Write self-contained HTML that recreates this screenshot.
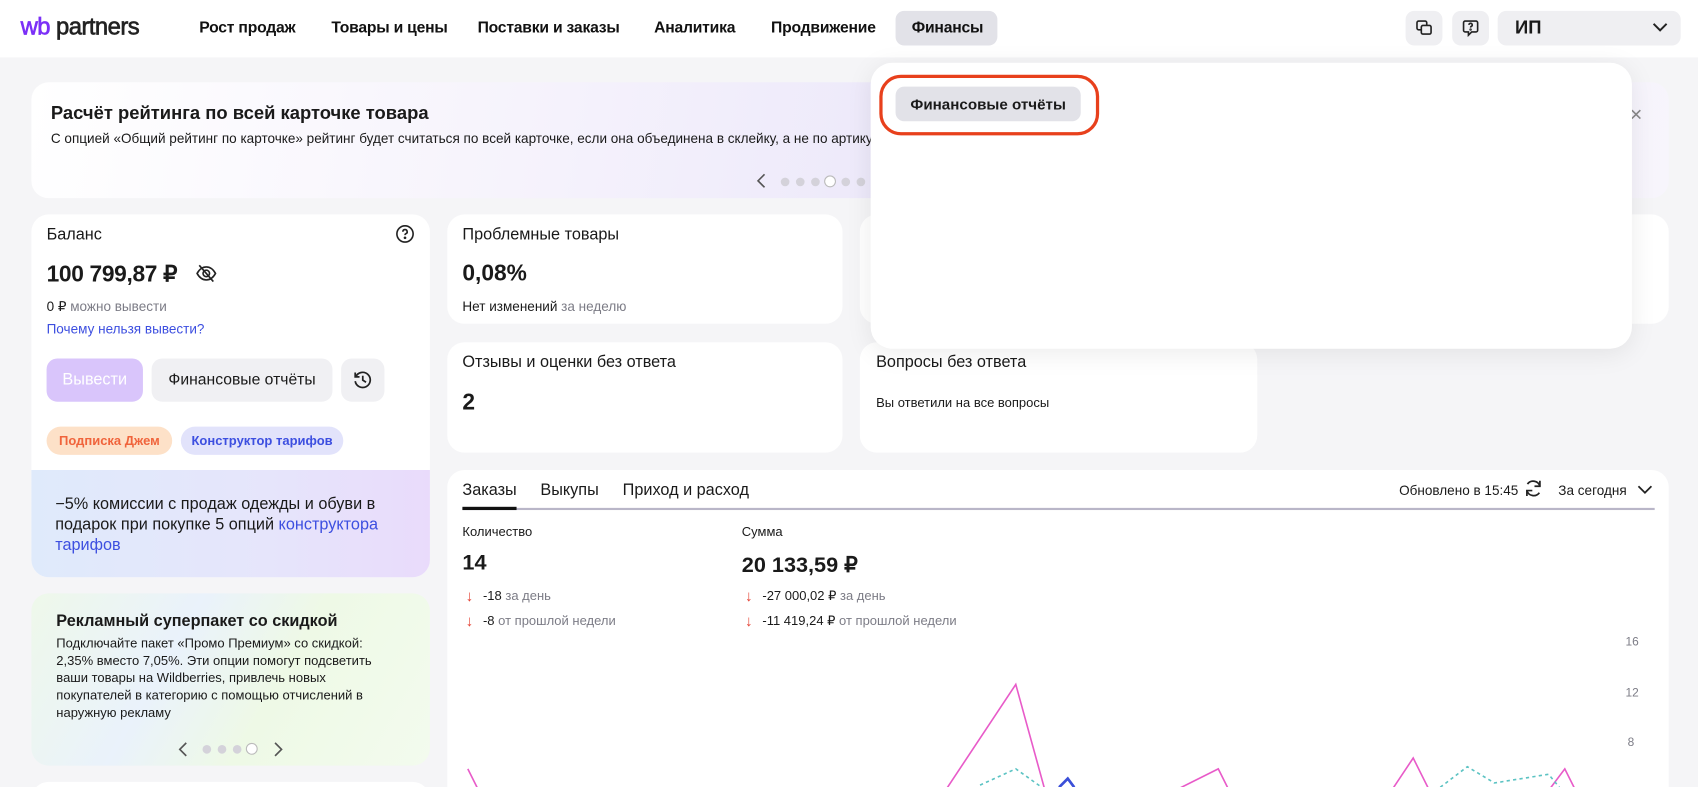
<!DOCTYPE html>
<html><head><meta charset="utf-8"><style>
*{box-sizing:border-box;margin:0;padding:0}
html,body{width:1698px;height:787px;overflow:hidden;background:#f5f5f7}
#w{position:absolute;left:0;top:0;width:1568px;height:727px;overflow:hidden;transform:scale(1.08291);transform-origin:0 0;font-family:"Liberation Sans",sans-serif;color:#1a1a1a;background:#f5f5f7}
.a{position:absolute}
.card{position:absolute;background:#fff;border-radius:16px;overflow:hidden}
.nav{position:absolute;top:18px;font-size:14.5px;font-weight:bold;color:#111;letter-spacing:-0.2px}
.t13{font-size:12.5px}
.g{color:#7c7c86}
.dot{position:absolute;width:8px;height:8px;border-radius:50%;background:#d4d2da}
</style></head><body><div id="w">
<!-- header -->
<div class="a" style="left:0;top:0;width:1568px;height:53px;background:#fff"></div>
<div class="a" style="left:19px;top:12px;font-size:22px;letter-spacing:-0.5px;-webkit-text-stroke:0.6px currentColor"><span style="color:#7b2ff7">wb</span> <span style="color:#222">partners</span></div>
<div class="nav" style="left:184px">Рост продаж</div>
<div class="nav" style="left:306px">Товары и цены</div>
<div class="nav" style="left:441px">Поставки и заказы</div>
<div class="nav" style="left:604px">Аналитика</div>
<div class="nav" style="left:712px">Продвижение</div>
<div class="a" style="left:827px;top:10px;width:94px;height:32px;background:#e2e2e8;border-radius:8px"></div>
<div class="nav" style="left:842px">Финансы</div>
<div class="a" style="left:1298px;top:10px;width:34px;height:32px;background:#efeff2;border-radius:8px"></div>
<svg class="a" style="left:1307px;top:18px" width="16" height="16" viewBox="0 0 16 16" fill="none" stroke="#222" stroke-width="1.5"><rect x="1.5" y="1.5" width="9" height="8" rx="1.5"/><rect x="5.5" y="5.5" width="9" height="8" rx="1.5" fill="#efeff2"/></svg>
<div class="a" style="left:1341px;top:10px;width:34px;height:32px;background:#efeff2;border-radius:8px"></div>
<svg class="a" style="left:1350px;top:18px" width="16" height="16" viewBox="0 0 16 16" fill="none" stroke="#222" stroke-width="1.5"><path d="M3 1.5h10a1.5 1.5 0 0 1 1.5 1.5v7a1.5 1.5 0 0 1-1.5 1.5H9l-3 3v-3H3A1.5 1.5 0 0 1 1.5 10V3A1.5 1.5 0 0 1 3 1.5z"/><path d="M6.5 5a1.5 1.5 0 1 1 2 1.4c-.5.2-.5.6-.5 1.1" /><circle cx="8" cy="9.3" r=".4" fill="#222"/></svg>
<div class="a" style="left:1383px;top:10px;width:169px;height:32px;background:#efeff2;border-radius:8px"></div>
<div class="a" style="left:1399px;top:16px;font-size:17px;font-weight:bold">ИП</div>
<svg class="a" style="left:1526px;top:20px" width="14" height="10" viewBox="0 0 14 10" fill="none" stroke="#222" stroke-width="1.8"><path d="M1 2l6 6 6-6"/></svg>

<!-- banner -->
<div class="card" style="left:29px;top:76px;width:1512px;height:107px;background:linear-gradient(100deg,#fff 0%,#f6f3fc 30%,#ece8fa 55%,#f3effb 80%,#f7f5fc 100%)"></div>
<div class="a" style="left:47px;top:95px;font-size:17px;font-weight:bold">Расчёт рейтинга по всей карточке товара</div>
<div class="a" style="left:47px;top:121px;white-space:nowrap;font-size:12.5px">С опцией «Общий рейтинг по карточке» рейтинг будет считаться по всей карточке, если она объединена в склейку, а не по артикулу</div>
<svg class="a" style="left:698px;top:160px" width="10" height="14" viewBox="0 0 10 14" fill="none" stroke="#555" stroke-width="1.5"><path d="M8 1L2 7l6 6"/></svg>
<div class="dot" style="left:721px;top:164px"></div><div class="dot" style="left:735px;top:164px"></div><div class="dot" style="left:749px;top:164px"></div>
<div class="dot" style="left:761px;top:162px;width:11px;height:11px;background:#fff;border:1.5px solid #bbb"></div>
<div class="dot" style="left:777px;top:164px"></div><div class="dot" style="left:791px;top:164px"></div>
<div class="a" style="left:1505px;top:95px;font-size:20px;color:#888">×</div>

<!-- balance -->
<div class="card" style="left:29px;top:198px;width:368px;height:335px"></div>
<div class="a" style="left:43px;top:208px;font-size:15px">Баланс</div>
<svg class="a" style="left:365px;top:207px" width="18" height="18" viewBox="0 0 18 18" fill="none" stroke="#222" stroke-width="1.5"><circle cx="9" cy="9" r="7.5"/><path d="M7 7a2 2 0 1 1 2.7 1.9c-.5.2-.7.6-.7 1.2"/><circle cx="9" cy="12.6" r=".5" fill="#222"/></svg>
<div class="a" style="left:43px;top:241px;font-size:21px;font-weight:bold;letter-spacing:-0.3px">100 799,87 ₽</div>
<svg class="a" style="left:180px;top:243px" width="21" height="19" viewBox="0 0 21 19" fill="none" stroke="#222" stroke-width="1.5"><path d="M2 9.5C4.5 5 8 3.5 10.5 3.5S16.5 5 19 9.5c-2.5 4.5-6 6-8.5 6S4.5 14 2 9.5z"/><circle cx="10.5" cy="9.5" r="3"/><path d="M4 2l13 15"/></svg>
<div class="a t13" style="left:43px;top:275px">0 ₽ <span class="g">можно вывести</span></div>
<div class="a t13" style="left:43px;top:297px;color:#3d4fe0">Почему нельзя вывести?</div>
<div class="a" style="left:43px;top:331px;width:89px;height:40px;background:#d9c5fb;border-radius:10px;color:#fff;font-size:15px;text-align:center;line-height:40px">Вывести</div>
<div class="a" style="left:140px;top:331px;width:167px;height:40px;background:#f0f0f3;border-radius:10px;font-size:14.5px;text-align:center;line-height:40px">Финансовые отчёты</div>
<div class="a" style="left:315px;top:331px;width:40px;height:40px;background:#f0f0f3;border-radius:10px"></div>
<svg class="a" style="left:325px;top:341px" width="20" height="20" viewBox="0 0 20 20" fill="none" stroke="#222" stroke-width="1.6"><path d="M3.5 7A7 7 0 1 1 3 11"/><path d="M3 3v4h4"/><path d="M10 6v4l3 2"/></svg>
<div class="a" style="left:43px;top:394px;height:26px;width:116px;text-align:center;line-height:26px;background:#fde1c8;border-radius:13px;color:#f0643c;font-weight:bold;font-size:12px">Подписка Джем</div>
<div class="a" style="left:167px;top:394px;height:26px;width:150px;text-align:center;line-height:26px;background:#e2e3fb;border-radius:13px;color:#3d4fe0;font-weight:bold;font-size:12px">Конструктор тарифов</div>
<div class="a" style="left:29px;top:434px;width:368px;height:99px;border-radius:0 0 16px 16px;background:linear-gradient(90deg,#dfeafb,#e6e5fb 60%,#e9dbfb)"></div>
<div class="a" style="left:51px;top:456px;width:320px;font-size:15px;line-height:19px">−5% комиссии с продаж одежды и обуви в подарок при покупке 5 опций <span style="color:#3d4fe0">конструктора тарифов</span></div>

<!-- promo -->
<div class="card" style="left:29px;top:548px;width:368px;height:159px;background:linear-gradient(120deg,#eef8ea 0%,#eaf2fb 35%,#eef9e6 60%,#f3fbee 100%)"></div>
<div class="a" style="left:52px;top:565px;font-size:15px;font-weight:bold">Рекламный суперпакет со скидкой</div>
<div class="a" style="left:52px;top:586px;width:320px;font-size:12px;line-height:16px">Подключайте пакет «Промо Премиум» со скидкой: 2,35% вместо 7,05%. Эти опции помогут подсветить ваши товары на Wildberries, привлечь новых покупателей в категорию с помощью отчислений в наружную рекламу</div>
<svg class="a" style="left:164px;top:685px" width="10" height="14" viewBox="0 0 10 14" fill="none" stroke="#555" stroke-width="1.5"><path d="M8 1L2 7l6 6"/></svg>
<div class="dot" style="left:187px;top:688px"></div><div class="dot" style="left:201px;top:688px"></div><div class="dot" style="left:215px;top:688px"></div>
<div class="dot" style="left:227px;top:686px;width:11px;height:11px;background:#fff;border:1.5px solid #bbb"></div>
<svg class="a" style="left:252px;top:685px" width="10" height="14" viewBox="0 0 10 14" fill="none" stroke="#555" stroke-width="1.5"><path d="M2 1l6 6-6 6"/></svg>
<div class="card" style="left:29px;top:722px;width:368px;height:40px"></div>

<!-- small cards -->
<div class="card" style="left:413px;top:198px;width:365px;height:101px"></div>
<div class="a" style="left:427px;top:208px;font-size:15px">Проблемные товары</div>
<div class="a" style="left:427px;top:241px;font-size:21px;font-weight:bold">0,08%</div>
<div class="a t13" style="left:427px;top:276px">Нет изменений <span class="g">за неделю</span></div>
<div class="card" style="left:794px;top:198px;width:367px;height:101px"></div>
<div class="card" style="left:1177px;top:198px;width:364px;height:101px"></div>
<div class="card" style="left:413px;top:316px;width:365px;height:102px"></div>
<div class="a" style="left:427px;top:326px;font-size:15px">Отзывы и оценки без ответа</div>
<div class="a" style="left:427px;top:360px;font-size:21px;font-weight:bold">2</div>
<div class="card" style="left:794px;top:316px;width:367px;height:102px"></div>
<div class="a" style="left:809px;top:326px;font-size:15px">Вопросы без ответа</div>
<div class="a" style="left:809px;top:365px;font-size:12px">Вы ответили на все вопросы</div>

<!-- chart card -->
<div class="card" style="left:413px;top:434px;width:1128px;height:320px"></div>
<div class="a" style="left:427px;top:444px;font-size:15px">Заказы</div>
<div class="a" style="left:499px;top:444px;font-size:15px">Выкупы</div>
<div class="a" style="left:575px;top:444px;font-size:15px">Приход и расход</div>
<div class="a" style="left:427px;top:469px;width:1101px;height:1.5px;background:#b9b6c8"></div>
<div class="a" style="left:427px;top:468px;width:50px;height:3px;background:#111"></div>
<div class="a" style="left:1292px;top:446px;font-size:12.5px">Обновлено в 15:45</div>
<svg class="a" style="left:1406px;top:441px" width="20" height="20" viewBox="0 0 20 20" fill="none" stroke="#222" stroke-width="1.6"><path d="M16 8A6.5 6.5 0 0 0 4.5 6"/><path d="M4 12a6.5 6.5 0 0 0 11.5 2"/><path d="M16 3v5h-5"/><path d="M4 17v-5h5"/></svg>
<div class="a" style="left:1439px;top:446px;font-size:12.5px">За сегодня</div>
<svg class="a" style="left:1512px;top:447px" width="14" height="10" viewBox="0 0 14 10" fill="none" stroke="#222" stroke-width="1.6"><path d="M1 2l6 6 6-6"/></svg>
<div class="a" style="left:427px;top:484px;font-size:12px">Количество</div>
<div class="a" style="left:685px;top:484px;font-size:12px">Сумма</div>
<div class="a" style="left:427px;top:509px;font-size:20px;font-weight:bold">14</div>
<div class="a" style="left:685px;top:509px;font-size:20px;font-weight:bold">20 133,59 ₽</div>
<div class="a" style="left:430px;top:542px;color:#e5483a;font-size:14px">↓</div>
<div class="a" style="left:446px;top:543px;font-size:12px">-18 <span class="g">за день</span></div>
<div class="a" style="left:430px;top:565px;color:#e5483a;font-size:14px">↓</div>
<div class="a" style="left:446px;top:566px;font-size:12px">-8 <span class="g">от прошлой недели</span></div>
<div class="a" style="left:688px;top:542px;color:#e5483a;font-size:14px">↓</div>
<div class="a" style="left:704px;top:543px;font-size:12px">-27 000,02 ₽ <span class="g">за день</span></div>
<div class="a" style="left:688px;top:565px;color:#e5483a;font-size:14px">↓</div>
<div class="a" style="left:704px;top:566px;font-size:12px">-11 419,24 ₽ <span class="g">от прошлой недели</span></div>
<div class="a g" style="left:1501px;top:587px;font-size:11px">16</div>
<div class="a g" style="left:1501px;top:634px;font-size:11px">12</div>
<div class="a g" style="left:1503px;top:680px;font-size:11px">8</div>
<svg class="a" style="left:413px;top:580px" width="1128" height="147" viewBox="413 580 1128 147" fill="none">
<path d="M432 710L442 730M873 730L938 632L965 730M1085 730L1125 710L1135 730M1285 730L1305 700L1320 730M1430 730L1445 710L1455 730" stroke="#e85bc9" stroke-width="1.5"/>
<path d="M905 725L938 710L962 727M1330 727L1355 708L1380 723L1430 715L1440 727" stroke="#5cc3c3" stroke-width="1.5" stroke-dasharray="3 3"/>
<path d="M978 727L986 719L992 727" stroke="#3b4fd8" stroke-width="2.5"/>
</svg>

<!-- dropdown -->
<div class="a" style="left:804px;top:58px;width:703px;height:264px;background:#fff;border-radius:20px;box-shadow:0 4px 24px rgba(0,0,0,.08)"></div>
<div class="a" style="left:812px;top:69px;width:203px;height:56px;border:3px solid #e8401c;border-radius:20px"></div>
<div class="a" style="left:827px;top:80px;width:171px;height:32px;background:#e2e2e8;border-radius:8px;font-size:14px;font-weight:bold;text-align:center;line-height:32px">Финансовые отчёты</div>
</div></body></html>
